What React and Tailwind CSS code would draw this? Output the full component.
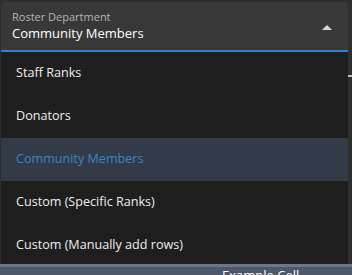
import React from 'react';

const options = [
  'Staff Ranks',
  'Donators',
  'Community Members',
  'Custom (Specific Ranks)',
  'Custom (Manually add rows)',
];

export default function App() {
  const selected = 'Community Members';

  return (
    <div
      className="relative w-[352px] h-[275px] overflow-hidden bg-[#2e2e2e] flex flex-col"
      style={{ fontFamily: '"Open Sans", "Noto Sans", sans-serif' }}
    >
      <div className="absolute right-0 top-[75px] w-[4px] h-[2px] bg-[#9fc4e6]" />

      <div className="w-[347px] ml-[1px] pt-[2px]">
        {/* select field */}
        <div className="h-[50px] rounded-t-[4px] bg-[#383838] border-b-2 border-[#2f7fd3] flex items-center justify-between pl-[11px] pr-[16px]">
          <div className="flex flex-col">
            <span className="text-[11px] leading-[14px] text-[#b4b4b4]">Roster Department</span>
            <span className="text-[13px] leading-[19px] text-white">{selected}</span>
          </div>
          <svg width="10" height="5" viewBox="0 0 10 5" className="mt-[3px]">
            <path d="M0 5 L5 0 L10 5 Z" fill="#d8d8d8" />
          </svg>
        </div>

        {/* menu */}
        <ul className="h-[212px] overflow-hidden bg-[#1e1e1e]">
          {options.map((o) => (
            <li
              key={o}
              className={
                o === selected
                  ? 'h-[43px] flex items-center pl-[15px] text-[12.6px] bg-[#323b47] text-[#3a83c8]'
                  : 'h-[43px] flex items-center pl-[15px] text-[12.6px] text-[#eeeeee]'
              }
            >
              {o}
            </li>
          ))}
        </ul>
      </div>

      {/* table behind the dropdown */}
      <div className="flex-1 flex flex-col bg-[#4d5869]">
        <div className="h-[3px] bg-[#6b7789]" />
        <div className="pl-[222px] text-[13px] leading-[16px] text-white">Example Cell</div>
      </div>
    </div>
  );
}
